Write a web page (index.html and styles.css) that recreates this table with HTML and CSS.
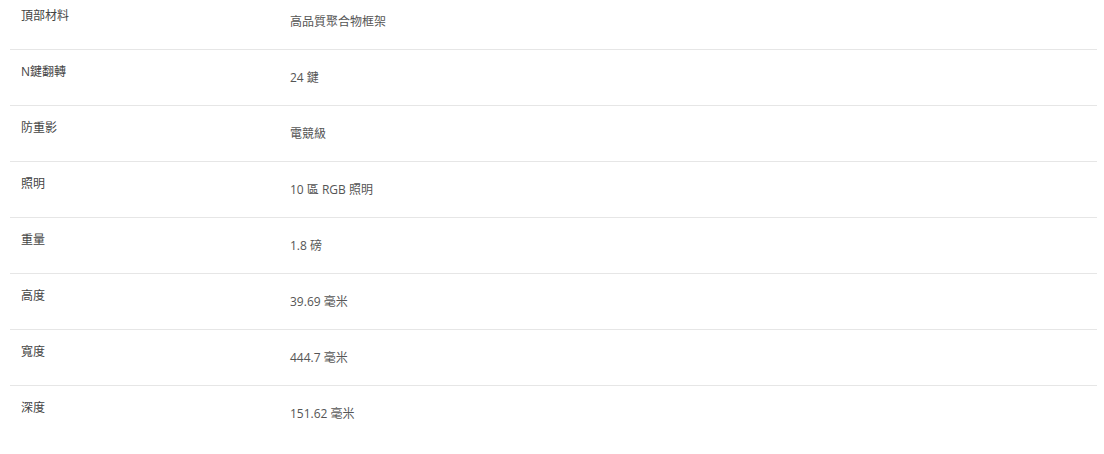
FILE: index.html
```html
<!DOCTYPE html>
<html lang="zh-Hant">
<head>
<meta charset="utf-8">
<link rel="stylesheet" href="styles.css">
</head>
<body>
<div class="specs">
  <div class="row"><div class="label">頂部材料</div><div class="value">高品質聚合物框架</div></div>
  <div class="row"><div class="label">N鍵翻轉</div><div class="value">24 鍵</div></div>
  <div class="row"><div class="label">防重影</div><div class="value">電競級</div></div>
  <div class="row"><div class="label">照明</div><div class="value">10 區 RGB 照明</div></div>
  <div class="row"><div class="label">重量</div><div class="value">1.8 磅</div></div>
  <div class="row"><div class="label">高度</div><div class="value">39.69 毫米</div></div>
  <div class="row"><div class="label">寬度</div><div class="value">444.7 毫米</div></div>
  <div class="row last"><div class="label">深度</div><div class="value">151.62 毫米</div></div>
</div>
</body>
</html>
```
FILE: styles.css
```css
html, body {
  margin: 0;
  padding: 0;
  background: #ffffff;
}
body {
  font-family: "Open Sans", "Noto Sans CJK TC", sans-serif;
  font-size: 12px;
  line-height: 16px;
  color: #444444;
}
.specs {
  margin: -6px 7px 0 10px;
}
.row {
  display: flex;
  align-items: flex-start;
  height: 55px;
  border-bottom: 1px solid #e6e6e6;
}
.row.last {
  border-bottom: none;
}
.label {
  width: 269px;
  padding-left: 11px;
  padding-top: 14px;
  color: #444444;
}
.value {
  padding-top: 20px;
  color: #555555;
}
```
